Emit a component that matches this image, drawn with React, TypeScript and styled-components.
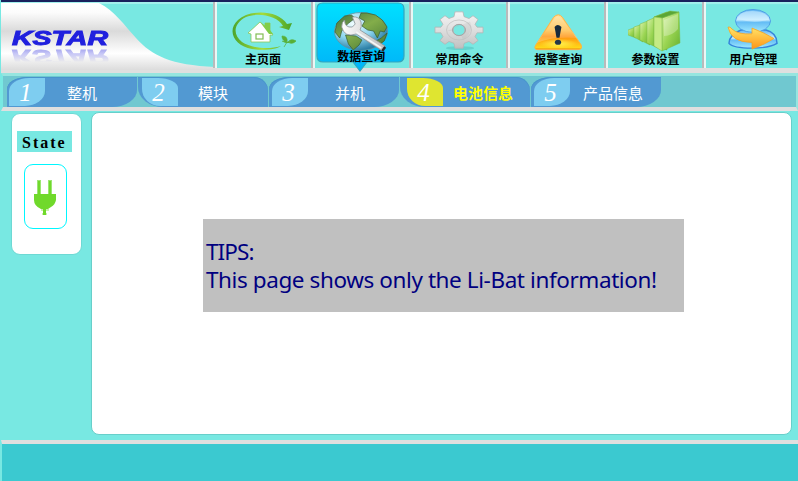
import React from "react";
import styled, { createGlobalStyle } from "styled-components";

const cjk = '"Noto Sans CJK SC", sans-serif';

const GlobalStyle = createGlobalStyle`
  * { box-sizing: border-box; }
  body { margin: 0; background: #78e8e2; overflow: hidden; }
  svg { display: block; }
`;

const Screen = styled.div`
  width: 798px;
  height: 481px;
  display: flex;
  flex-direction: column;
  background: #78e8e2;
  border-left: 1px solid #78e8e2;
  font-family: ${cjk};
`;

const Header = styled.header`
  height: 73px;
  flex: none;
  display: flex;
  border-top: 2px solid #18215c;
  border-bottom: 5px solid #dfdfdf;
`;

const Brand = styled.div`
  width: 212px;
  height: 71px;
  flex: none;
  position: relative;
  box-shadow: inset 0 2px #a2f0ec;
`;

const Wordmark = styled.svg`
  position: absolute;
  left: 10px;
  top: 23px;
  overflow: visible;
  -webkit-box-reflect: below -7px linear-gradient(transparent 30%, rgba(0, 0, 0, 0.38) 80%);
`;

const NavItem = styled.button<{ $nudge: number }>`
  width: 97.8px;
  flex: none;
  height: 66px;
  padding: 0 0 0 ${(p) => p.$nudge}px;
  border: 0;
  border-left: 2px solid #b9babb;
  box-shadow: inset 2px 0 #eaf7f5, inset 0 2px 1px #a2f0ec;
  background: #78e8e2;
  display: flex;
  justify-content: center;
  position: relative;
`;

const ActiveBubble = styled.div`
  position: absolute;
  left: 2px;
  top: 0;
  width: 93px;
  height: 70px;
  z-index: 1;
`;

const NavContent = styled.span<{ $active?: boolean }>`
  width: 92px;
  display: flex;
  flex-direction: column;
  align-items: center;
  position: relative;
  z-index: 2;
  padding-top: ${(p) => (p.$active ? 9 : 7)}px;
`;

const IconSlot = styled.span`
  height: 44px;
  display: flex;
  align-items: flex-start;
`;

const NavLabel = styled.span<{ $active?: boolean }>`
  font: 700 12px/14px ${cjk};
  color: #000;
  margin-top: ${(p) => (p.$active ? -6 : -1)}px;
  white-space: nowrap;
`;

const TabBar = styled.nav`
  height: 38px;
  flex: none;
  display: flex;
  align-items: flex-start;
  padding: 1px 0 0 4px;
  background: #70c8d0;
  border-top: 3px solid #96e5df;
  border-bottom: 4px solid #dfdfdf;
  border-right: 2px solid #96e5df;
  border-left: 2px solid #78e8e2;
`;

const Tab = styled.button<{ $flip?: boolean }>`
  width: 130px;
  margin-right: 1px;
  height: 30px;
  flex: none;
  padding: 0;
  border: 0;
  background: #5299d2;
  box-shadow: inset 0 1px #4794cc;
  border-radius: ${(p) => (p.$flip ? "0 14px 0 25px / 0 14px 0 20px" : "20px 0 25px 0 / 12px 0 17px 0")};
  display: flex;
`;

const Leaf = styled.span<{ $flip?: boolean; $active?: boolean; $x: number }>`
  margin: 1px 0 0 ${(p) => p.$x}px;
  width: 36px;
  height: 28px;
  flex: none;
  background: ${(p) => (p.$active ? "#dfe530" : "#7ecdf0")};
  border-radius: ${(p) => (p.$flip ? "0 20px 0 18px / 0 10px 0 17px" : "20px 0 20px 0 / 13px 0 15px 0")};
  font: italic 25px/29px "Liberation Serif", serif;
  color: #fff;
  text-align: center;
  padding-right: 3px;
`;

const TabLabel = styled.span<{ $active?: boolean; $gap: number }>`
  margin-left: ${(p) => p.$gap}px;
  font: ${(p) => (p.$active ? 700 : 400)} 15px/31px ${cjk};
  color: ${(p) => (p.$active ? "#ffff00" : "#fff")};
  white-space: nowrap;
`;

const Body = styled.main`
  height: 329px;
  flex: none;
  display: flex;
  align-items: flex-start;
  padding: 2px 6px 5px 10px;
  gap: 10px;
`;

const StatePanel = styled.aside`
  width: 71px;
  height: 142px;
  flex: none;
  background: #fff;
  border: 1px solid #6ed9d4;
  border-radius: 9px;
  display: flex;
  flex-direction: column;
  align-items: flex-start;
`;

const StateTitle = styled.div`
  margin: 17px 0 0 5px;
  width: 55px;
  height: 21px;
  background: #78e8e2;
  font: 700 16px/24px "Liberation Serif", serif;
  letter-spacing: 2px;
  padding-left: 5px;
  color: #000;
`;

const PlugBox = styled.div`
  width: 43px;
  height: 65px;
  margin: 12px 0 0 12px;
  border: 1px solid #00f7ff;
  border-radius: 9px;
  padding: 15px 0 0 8px;
`;

const Content = styled.section`
  width: 701px;
  height: 323px;
  flex: none;
  margin-top: -1px;
  margin-left: -1px;
  background: #fff;
  border: 1px solid #68cfca;
  border-radius: 8px;
  padding: 106px 0 0 111px;
`;

const Tips = styled.div`
  width: 481px;
  height: 93px;
  padding: 19px 0 0 3px;
  background: #c0c0c0;
  color: #000080;
  font: 22.5px/28px "Noto Sans", sans-serif;
  white-space: nowrap;
`;

const TipLine = styled.p<{ $spacing: number }>`
  margin: 0;
  letter-spacing: ${(p) => p.$spacing}px;
`;

const Footer = styled.footer`
  flex: 1;
  border-top: 4px solid #dfdfdf;
  border-left: 1px solid #78e8e2;
  background: #3bc9d0;
`;

const Logo = () => (
  <>
    <svg width="214" height="71" viewBox="0 2 214 71">
      <defs>
        <linearGradient id="silver" x2="0" y2="1">
          <stop stopColor="#fff" /><stop offset=".14" stopColor="#fcfcfc" />
          <stop offset=".42" stopColor="#dadada" /><stop offset=".75" stopColor="#fff" />
          <stop offset="1" stopColor="#dcdcdc" />
        </linearGradient>
      </defs>
      <path d="M0 3H98C114 11 123 25 135 38C151 56 170 65 214 67V70H0Z" fill="url(#silver)" />
    </svg>
    <Wordmark width="104" height="26" viewBox="0 0 104 26">
      <text x="1" y="20" textLength="96" lengthAdjust="spacingAndGlyphs" fontFamily="Liberation Sans" fontWeight="700" fontStyle="italic" fontSize="21" fill="#2020de" stroke="#2020de" strokeWidth="1">KSTAR</text>
    </Wordmark>
  </>
);

const HomeIcon = () => (
  <svg width="70" height="44" viewBox="0 0 70 44">
    <defs>
      <linearGradient id="ring"><stop stopColor="#4ca52c" /><stop offset=".5" stopColor="#a6dc3a" /><stop offset="1" stopColor="#49a529" /></linearGradient>
    </defs>
    <path d="M59 15C50 1 22 0 10 11C-2 22 7 37 24 40C37 42 49 40 53 37C40 41 23 39 14 33C4 25 6 14 18 8C30 3 50 7 55 17L51 18L61 21L64 14Z" fill="url(#ring)" />
    <path d="M20 24L32 13L37 17V14H42V22L45 26H42V33H23V25Z" fill="#fff" stroke="#8ac955" strokeWidth=".8" />
    <path d="M32 13L37 17V14H42V21L45 25H41Z" fill="#82cd48" />
    <rect x="28" y="25" width="7" height="5" fill="#fff" stroke="#82bd53" strokeWidth="1.2" />
    <path d="M54 27Q60 27 59 33Q54 32 54 27M60 33Q63 29 68 32Q64 36 60 33M54 32Q58 35 63 33M56 38L59 33" fill="#58af36" stroke="#58af36" strokeWidth=".7" />
  </svg>
);

const GlobeIcon = () => (
  <svg width="56" height="44" viewBox="0 0 58 44" preserveAspectRatio="none">
    <defs>
      <radialGradient id="ocean" cx=".35" cy=".3" r=".7"><stop stopColor="#f0fdff" /><stop offset=".55" stopColor="#8fd6ef" /><stop offset="1" stopColor="#2c7fa6" /></radialGradient>
      <linearGradient id="land" x2=".8" y2="1"><stop stopColor="#3f7044" /><stop offset=".5" stopColor="#83ad4a" /><stop offset="1" stopColor="#4b7b35" /></linearGradient>
      <linearGradient id="steel" x2="1"><stop stopColor="#fff" /><stop offset="1" stopColor="#bbb" /></linearGradient>
    </defs>
    <ellipse cx="29" cy="20.5" rx="27.5" ry="19" fill="url(#ocean)" stroke="#6494a0" strokeWidth=".8" />
    <path d="M4 12L12 5L19 4L23 7L15 13L9 20L7 27L2 21ZM29 2L35 2L44 4L51 9L56 16L53 21L49 20L46 27L42 20L36 19L30 15L33 10L27 7ZM13 24L24 25L30 29L27 34L21 39L16 33ZM50 27L56 22L53 30L46 35L43 31Z" fill="url(#land)" stroke="#375b2e" strokeWidth=".7" />
    <path d="M12 9Q12 17 20 16L23 13L20 6Q27 5 29 11Q30 16 28 19L54 35L51 40L24 23Q12 27 9 16Q9 11 12 9Z" fill="url(#steel)" stroke="#888f93" strokeWidth=".8" />
    <path d="M24 21L50 37" stroke="#f5f7f7" strokeWidth="1.5" />
    <path d="M51 40L54 36" stroke="#29292b" strokeWidth="2.5" />
  </svg>
);

const GearIcon = () => (
  <svg width="50" height="42" viewBox="0 0 50 44" preserveAspectRatio="none">
    <defs>
      <linearGradient id="gear" x2="0" y2="1"><stop stopColor="#f5f5f5" /><stop offset=".55" stopColor="#dcdcdc" /><stop offset="1" stopColor="#c0c0c0" /></linearGradient>
    </defs>
    <ellipse cx="26" cy="41" rx="14" ry="2" fill="#4fbeb9" opacity=".5" />
    <path fillRule="evenodd" d="M21 3H29L30 8L35 10L39 7L44 11L41 16L43 19H49V25H43L41 29L44 33L39 37L35 34L30 36L29 41H21L20 36L15 34L11 37L6 33L9 29L7 25H1V19H7L9 16L6 11L11 7L15 10L20 8ZM25 16A6 6 0 1 0 25 28A6 6 0 1 0 25 16Z" fill="url(#gear)" stroke="#b5b5b5" strokeWidth=".8" />
    <ellipse cx="25" cy="22" rx="12.5" ry="10.5" fill="none" stroke="#c2c2c2" strokeWidth=".8" />
    <ellipse cx="25" cy="22" rx="6.5" ry="5.8" fill="none" stroke="#a4a4a4" />
    <path d="M13 23L36 13Q40 24 29 32L27 27Q33 24 29 18Q22 14 19 23Z" fill="#aaa" opacity=".2" />
  </svg>
);

const WarningIcon = () => (
  <svg width="50" height="44" viewBox="0 0 51 44">
    <defs>
      <linearGradient id="alert" x2="0" y2="1"><stop stopColor="#ffe098" /><stop offset=".45" stopColor="#ffbd45" /><stop offset=".62" stopColor="#ff9312" /><stop offset=".95" stopColor="#ffd818" /><stop offset="1" stopColor="#e46910" /></linearGradient>
      <radialGradient id="glow"><stop stopColor="#fff34f" /><stop offset="1" stopColor="#fff34f" stopOpacity="0" /></radialGradient>
    </defs>
    <path d="M21 8Q26 3 30 8L49 36Q51 41 46 41H5Q0 41 3 36Z" fill="url(#alert)" stroke="#ffb345" />
    <ellipse cx="26" cy="35" rx="19" ry="5" fill="url(#glow)" />
    <path d="M4 34Q22 27 45 29L29 9Q25 5 22 9Z" fill="#fff" opacity=".2" />
    <path d="M22 18Q25 14 29 18L27 29H24Z" fill="#172b3d" /><ellipse cx="25.5" cy="33.5" rx="3.2" ry="2.6" fill="#243849" />
  </svg>
);

const BarsIcon = () => (
  <svg width="56" height="44" viewBox="0 0 56 44">
    <defs>
      <linearGradient id="bars" x2="1" y2="1"><stop stopColor="#dcf3b0" /><stop offset=".5" stopColor="#9bd553" /><stop offset="1" stopColor="#66b02f" /></linearGradient>
    </defs>
    <g fill="url(#bars)" stroke="#7bb944" strokeWidth=".5">
      <path d="M0 21L8 18V29L0 26Z" /><path d="M6 18L15 15V33L6 28Z" /><path d="M12 15L22 11V36L12 31Z" />
      <path d="M19 12L30 7V39L19 34Z" /><path d="M26 8L39 3V41L26 37Z" /><path d="M34 9L51 3L52 34L34 42Z" />
      <path d="M26 8L42 2L51 3L34 9Z" fill="#5ba636" /><path d="M26 8L34 9V42L26 37Z" fill="#c4ea84" />
    </g>
    <path d="M36 11L50 5V20Q44 27 36 27Z" fill="#fff" opacity=".28" />
  </svg>
);

const UserIcon = () => (
  <svg width="52" height="42" viewBox="0 0 52 44" preserveAspectRatio="none">
    <defs>
      <linearGradient id="person" x2="0" y2="1"><stop stopColor="#62b6f4" /><stop offset=".45" stopColor="#c6edff" /><stop offset=".55" stopColor="#63bcf5" /><stop offset="1" stopColor="#a2eaff" /></linearGradient>
      <linearGradient id="arrow" x2="0" y2="1"><stop stopColor="#ffe66a" /><stop offset="1" stopColor="#ff9415" /></linearGradient>
    </defs>
    <path d="M2 36Q2 27 14 22H39Q50 25 50 36Q42 41 25 41Q6 41 2 36Z" fill="url(#person)" stroke="#3584db" strokeWidth="1.5" />
    <ellipse cx="26" cy="12.5" rx="17.5" ry="12" fill="url(#person)" stroke="#4c9ee4" />
    <path d="M10 10Q13 2 25 2Q39 2 42 11Q26 16 10 10Z" fill="#d7f2ff" opacity=".5" />
    <path d="M1 19Q3 18 5 21Q11 27 25 26V20Q38 25 47 31Q38 37 25 42V35Q4 35 1 19Z" fill="url(#arrow)" stroke="#f2a323" strokeWidth=".8" />
  </svg>
);

const PlugIcon = () => (
  <svg width="24" height="36" viewBox="0 0 24 36">
    <path d="M4 0H8V16H4ZM15 0H19V16H15Z" fill="#9be673" />
    <path d="M5 1H7V15H5ZM16 1H18V15H16ZM1 14H23V20Q22 25 18 27L15 29H13V35H10V29H8Q1 26 1 20Z" fill="#70d92b" />
    <path d="M8 29H16V31H8ZM9 33H14V35H9Z" fill="#70d92b" opacity=".4" />
  </svg>
);

const navigation = [
  { label: "主页面", icon: HomeIcon, nudge: 0 },
  { label: "数据查询", icon: GlobeIcon, nudge: 1, active: true },
  { label: "常用命令", icon: GearIcon, nudge: 2 },
  { label: "报警查询", icon: WarningIcon, nudge: 4 },
  { label: "参数设置", icon: BarsIcon, nudge: 3 },
  { label: "用户管理", icon: UserIcon, nudge: 3 },
];

const tabs = [
  { label: "整机", x: 2, gap: 22 },
  { label: "模块", x: 4, gap: 20, flip: true },
  { label: "并机", x: 3, gap: 27 },
  { label: "电池信息", x: 7, gap: 10, flip: true, active: true },
  { label: "产品信息", x: 3, gap: 13 },
];

export default function App() {
  return (
    <>
      <GlobalStyle />
      <Screen>
        <Header>
          <Brand><Logo /></Brand>
          {navigation.map(({ label, icon: Icon, nudge, active }) => (
            <NavItem key={label} $nudge={nudge}>
              {active && (
                <ActiveBubble>
                  <svg width="93" height="70" viewBox="0 0 93 70">
                    <defs><linearGradient id="bubble" x2="0" y2="1"><stop stopColor="#00e0ff" /><stop offset="1" stopColor="#00b3f8" /></linearGradient></defs>
                    <path d="M8 1H83Q89 1 89 7V54Q89 60 83 60H52L45 69L38 60H8Q2 60 2 54V7Q2 1 8 1Z" fill="url(#bubble)" stroke="#34a5bd" strokeWidth="1.2" />
                  </svg>
                </ActiveBubble>
              )}
              <NavContent $active={active}><IconSlot><Icon /></IconSlot><NavLabel $active={active}>{label}</NavLabel></NavContent>
            </NavItem>
          ))}
        </Header>
        <TabBar>
          {tabs.map(({ label, x, gap, flip, active }, i) => (
            <Tab key={label} $flip={flip}>
              <Leaf $flip={flip} $active={active} $x={x}>{i + 1}</Leaf>
              <TabLabel $gap={gap} $active={active}>{label}</TabLabel>
            </Tab>
          ))}
        </TabBar>
        <Body>
          <StatePanel>
            <StateTitle>State</StateTitle>
            <PlugBox><PlugIcon /></PlugBox>
          </StatePanel>
          <Content>
            <Tips>
              <TipLine $spacing={-0.9}>TIPS:</TipLine>
              <TipLine $spacing={-0.41}>This page shows only the Li-Bat information!</TipLine>
            </Tips>
          </Content>
        </Body>
        <Footer />
      </Screen>
    </>
  );
}
